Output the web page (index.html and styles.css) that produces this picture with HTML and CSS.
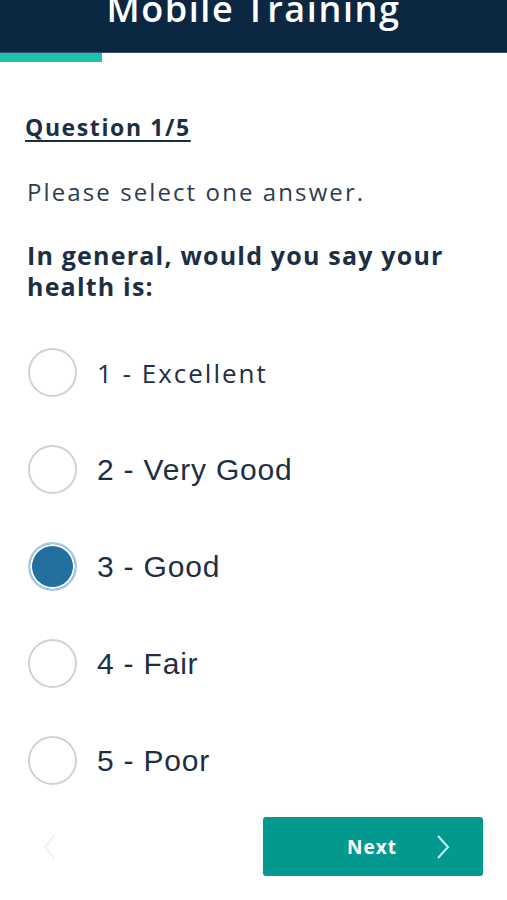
FILE: index.html
```html
<!DOCTYPE html>
<html>
<head>
    <title>Mobile Training</title>
    <link rel="stylesheet" href="styles.css">
</head>
<body>
<div class="header">
    <h1 class="title">Mobile Training</h1>
</div>
<div class="progress"><div class="progress-fill"></div></div>

<div class="content">
    <h2 class="question-num">Question 1/5</h2>
    <p class="hint">Please select one answer.</p>
    <p class="question">In general, would you say your health is:</p>

    <ul class="options">
        <li class="option"><span class="radio"></span><span class="label label-alt">1 - Excellent</span></li>
        <li class="option"><span class="radio"></span><span class="label">2 - Very Good</span></li>
        <li class="option"><span class="radio checked"></span><span class="label">3 - Good</span></li>
        <li class="option"><span class="radio"></span><span class="label">4 - Fair</span></li>
        <li class="option"><span class="radio"></span><span class="label">5 - Poor</span></li>
    </ul>
</div>

<div class="nav">
    <span class="back">
        <svg width="14" height="28" viewBox="0 0 14 28"><path d="M12 2 L2 14 L12 26" fill="none" stroke="#eef0f2" stroke-width="2"/></svg>
    </span>
    <button class="next">
        <span>Next</span>
        <svg width="14" height="26" viewBox="0 0 14 26"><path d="M2 2 L12 13 L2 24" fill="none" stroke="#bff3ee" stroke-width="2"/></svg>
    </button>
</div>
</body>
</html>
```

FILE: styles.css
```css
body {
    margin: 0;
    font-family: 'Open Sans', 'Noto Sans', sans-serif;
    background-color: #fff;
    color: #1c2f44;
}

.header {
    background-color: #0b2742;
    height: 53px;
    display: flex;
    justify-content: center;
    align-items: flex-end;
    overflow: hidden;
    border-bottom: 1px solid #30506c;
    box-sizing: border-box;
}

.title {
    margin: 0;
    padding-bottom: 25px;
    font-size: 36px;
    line-height: 1;
    font-weight: 600;
    color: #fff;
    letter-spacing: 1.6px;
}

.progress {
    height: 9px;
}

.progress-fill {
    width: 102px;
    height: 100%;
    background-color: #1cc4ae;
}

.content {
    padding: 49px 25px 0 25px;
}

.question-num {
    margin: 0;
    font-size: 23px;
    font-weight: 700;
    letter-spacing: 1.6px;
    text-decoration: underline;
    text-underline-offset: 4px;
    line-height: 32px;
}

.hint {
    margin: 33px 0 0 2px;
    font-size: 24px;
    letter-spacing: 2.1px;
    line-height: 32px;
    color: #2c3d50;
}

.question {
    margin: 32px 0 0 2px;
    font-size: 25px;
    font-weight: 700;
    letter-spacing: 1.2px;
    line-height: 31px;
    max-width: 455px;
}

.options {
    list-style: none;
    margin: 46px 0 0 0;
    padding: 0;
    display: flex;
    flex-direction: column;
    gap: 48px;
}

.option {
    display: flex;
    align-items: center;
    gap: 20px;
    height: 49px;
}

.radio {
    width: 45px;
    height: 45px;
    border: 2px solid #cfd2d4;
    border-radius: 50%;
    margin-left: 3px;
    flex-shrink: 0;
}

.radio.checked {
    background-color: #2370a0;
    border-color: #a9cbe2;
    box-shadow: inset 0 0 0 2px #fff;
}

.label {
    font-family: 'Liberation Sans', Arial, sans-serif;
    font-size: 30px;
    letter-spacing: 0.8px;
    color: #1c2f44;
}

.label-alt {
    font-family: 'Open Sans', sans-serif;
    font-size: 26px;
    letter-spacing: 2px;
}

.nav {
    display: flex;
    justify-content: space-between;
    align-items: center;
    padding: 0 24px 0 43px;
    margin-top: 32px;
}

.back {
    display: flex;
}

.next {
    width: 220px;
    height: 59px;
    background-color: #04998f;
    border: none;
    border-radius: 3px;
    box-shadow: 0 3px 6px rgba(4, 153, 143, 0.15);
    color: #fff;
    font-family: 'Open Sans', sans-serif;
    font-size: 19px;
    font-weight: 700;
    letter-spacing: 1px;
    display: flex;
    align-items: center;
    justify-content: flex-end;
    gap: 39px;
    padding: 0 33px 0 0;
}
```
